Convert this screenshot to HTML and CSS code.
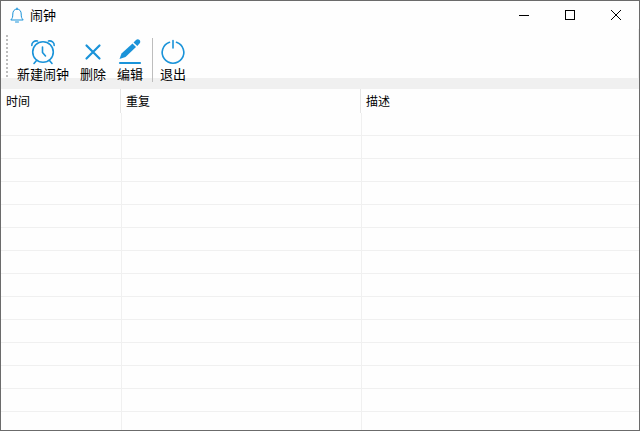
FILE: index.html
```
<!DOCTYPE html>
<html lang="zh-CN">
<head>
	<meta charset="UTF-8">
	<meta name="viewport" content="width=device-width, initial-scale=1.0">
	<title>闹钟</title>
	<link rel="stylesheet" href="styles.css">
</head>
<body>
	<div class="window">
		<header class="titlebar">
			<svg class="app-icon" width="14" height="16" viewBox="0 0 14 16">
				<path d="M7 1V2M7 2C4 2 2.800 4.500 2.800 7C2.800 10 2.500 11 .8 13H13.200C11.500 11 11.200 10 11.200 7C11.200 4.500 10 2 7 2ZM5.500 15H8.500"/>
			</svg>
			<h1 class="title">闹钟</h1>
			<div class="window-buttons">
				<button class="window-button" type="button" aria-label="最小化">
					<svg width="10" height="10" viewBox="0 0 10 10" shape-rendering="crispEdges"><path d="M0 5.500H10"/></svg>
				</button>
				<button class="window-button" type="button" aria-label="最大化">
					<svg width="10" height="10" viewBox="0 0 10 10" shape-rendering="crispEdges"><path d="M.5 .5H9.500V9.500H.5Z"/></svg>
				</button>
				<button class="window-button" type="button" aria-label="关闭">
					<svg width="10" height="10" viewBox="0 0 10 10"><path d="M0 0L10 10M10 0L0 10"/></svg>
				</button>
			</div>
		</header>

		<div class="toolbar">
			<div class="grip"></div>
			<button class="tool" type="button">
				<svg width="26" height="28" viewBox="0 0 26 28">
					<circle cx="13" cy="14" r="10.300"/>
					<path d="M12.500 9V14.500L15.500 18M6.500 22.500L4 25.500M19.500 22.500L22 25.500M1.800 7.500C1.500 4.500 4.500 2.300 7.500 3M24.200 7.500C24.500 4.500 21.500 2.300 18.500 3"/>
				</svg>
				<span>新建闹钟</span>
			</button>
			<button class="tool" type="button">
				<svg width="26" height="28" viewBox="0 0 26 28">
					<path class="thick" d="M6.500 7.500L19.500 20.500M19.500 7.500L6.500 20.500"/>
				</svg>
				<span>删除</span>
			</button>
			<button class="tool" type="button">
				<svg width="26" height="28" viewBox="0 0 26 28">
					<path class="solid" d="M2.500 21L4.500 15.500L15.500 5.500L19 9L8.500 19Z"/>
					<path class="solid" d="M16.500 4.500L19 2C20 1 21.500 1 22.500 2C23.500 3 23.500 4.500 22.500 5.500L20.300 8Z"/>
					<path class="thick" d="M3 25H23"/>
				</svg>
				<span>编辑</span>
			</button>
			<div class="separator"></div>
			<button class="tool" type="button">
				<svg width="26" height="28" viewBox="0 0 26 28">
					<path d="M13 2.500V10M9.500 4.200A10.800 10.800 0 1 0 16.500 4.200"/>
				</svg>
				<span>退出</span>
			</button>
		</div>

		<main class="list">
			<table class="alarms">
				<thead>
					<tr><th class="time">时间</th><th class="repeat">重复</th><th>描述</th></tr>
				</thead>
				<tbody>
					<tr><td></td><td></td><td></td></tr>
					<tr><td></td><td></td><td></td></tr>
					<tr><td></td><td></td><td></td></tr>
					<tr><td></td><td></td><td></td></tr>
					<tr><td></td><td></td><td></td></tr>
					<tr><td></td><td></td><td></td></tr>
					<tr><td></td><td></td><td></td></tr>
					<tr><td></td><td></td><td></td></tr>
					<tr><td></td><td></td><td></td></tr>
					<tr><td></td><td></td><td></td></tr>
					<tr><td></td><td></td><td></td></tr>
					<tr><td></td><td></td><td></td></tr>
					<tr><td></td><td></td><td></td></tr>
					<tr><td></td><td></td><td></td></tr>
				</tbody>
			</table>
		</main>
	</div>
</body>
</html>
```

FILE: styles.css
```
* {
	box-sizing: border-box;
}

body {
	margin: 0;
	font-family: "Noto Sans CJK SC", sans-serif;
	font-size: 13px;
	color: #000;
}

.window {
	display: flex;
	flex-direction: column;
	height: 100vh;
	border: 1px solid #6b6b6b;
	background: #fefefe;
}

.titlebar {
	display: flex;
	align-items: center;
	flex: none;
	height: 28px;
	padding-left: 9px;
}

.app-icon {
	fill: none;
	stroke: #1a93d9;
	stroke-linecap: round;
	stroke-linejoin: round;
}

.title {
	margin: 0 0 0 6px;
	font-size: 13px;
	font-weight: normal;
	line-height: 16px;
}

.window-buttons {
	display: flex;
	height: 100%;
	margin-left: auto;
}

.window-button {
	display: flex;
	align-items: center;
	justify-content: center;
	width: 46px;
	padding: 0;
	border: none;
	background: none;
}

.window-button svg {
	fill: none;
	stroke: #000;
}

.window-button:hover {
	background: #e5e5e5;
}

/* the labels run over the grey strip at the bottom */
.toolbar {
	display: flex;
	align-items: flex-start;
	flex: none;
	height: 60px;
	padding: 6px 5px 0;
	border-right: 1px solid #f0f0f0;
	background: linear-gradient(#fefefe 49px, #f0f0f0 49px);
}

.grip {
	width: 2px;
	height: 44px;
	margin-right: 4px;
	background: repeating-linear-gradient(#bdbdbd 0 2px, transparent 2px 4px);
}

.tool {
	display: flex;
	flex-direction: column;
	align-items: center;
	margin-right: 1px;
	padding: 3px 5px 0;
	border: none;
	background: none;
	color: #000;
	font: inherit;
	line-height: 16px;
}

.tool svg {
	fill: none;
	stroke: #1a93d9;
	stroke-width: 1.6;
	stroke-linecap: round;
	stroke-linejoin: round;
}

.tool .thick {
	stroke-width: 2.2;
}

.tool .solid {
	fill: #1a93d9;
	stroke: none;
}

.separator {
	width: 1px;
	height: 44px;
	margin: 3px 2px 0 3px;
	background: #bdbdbd;
}

.list {
	flex: 1;
	min-height: 0;
	overflow: hidden;
}

.alarms {
	width: 100%;
	table-layout: fixed;
	border-collapse: separate;
	border-spacing: 0;
}

.alarms th {
	height: 24px;
	padding: 0 5px;
	border-right: 1px solid #e5e5e5;
	font-size: 12px;
	font-weight: normal;
	line-height: 16px;
	text-align: left;
}

.alarms th:last-child {
	border-right: none;
}

.alarms .time {
	width: 120px;
}

.alarms .repeat {
	width: 240px;
}

.alarms td {
	height: 23px;
	padding: 0 5px;
	border-bottom: 1px solid #f0f0f0;
}

.alarms td + td {
	border-left: 1px solid #f0f0f0;
}
```
